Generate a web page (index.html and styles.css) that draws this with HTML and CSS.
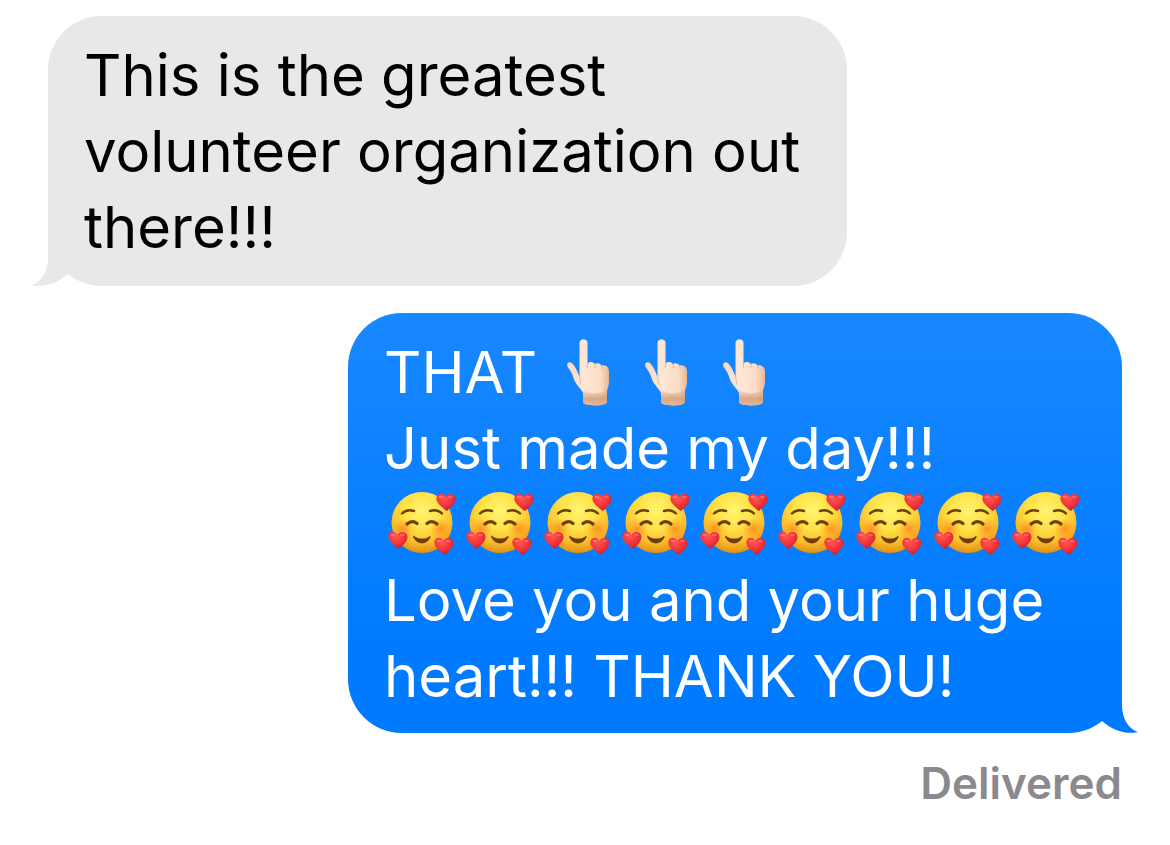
FILE: index.html
```html
<!DOCTYPE html>
<html lang="en">
<head>
<meta charset="utf-8">
<meta name="viewport" content="width=device-width, initial-scale=1">
<title>Messages</title>
<link rel="stylesheet" href="styles.css">
</head>
<body>
<svg class="sprite" aria-hidden="true">
  <defs>
    <radialGradient id="face-fill" cx="0.5" cy="0.3" r="0.7">
      <stop offset="0" stop-color="#fff570"/>
      <stop offset="0.45" stop-color="#ffe046"/>
      <stop offset="0.75" stop-color="#fcbe2b"/>
      <stop offset="1" stop-color="#e28f18"/>
    </radialGradient>
    <radialGradient id="blush">
      <stop offset="0" stop-color="#fb7a19" stop-opacity="0.7"/>
      <stop offset="1" stop-color="#fb8a19" stop-opacity="0"/>
    </radialGradient>
    <radialGradient id="heart-fill" cx="0.4" cy="0.3" r="0.7">
      <stop offset="0" stop-color="#ff5550"/>
      <stop offset="0.6" stop-color="#f2333a"/>
      <stop offset="1" stop-color="#c9222f"/>
    </radialGradient>
    <linearGradient id="skin" x1="0" y1="0" x2="1" y2="0">
      <stop offset="0" stop-color="#f8d6bd"/>
      <stop offset="0.4" stop-color="#fee7d6"/>
      <stop offset="0.8" stop-color="#fbdcc5"/>
      <stop offset="1" stop-color="#e6b794"/>
    </linearGradient>
    <linearGradient id="wrist" x1="0" y1="0" x2="0" y2="1">
      <stop offset="0" stop-color="#c98f6a" stop-opacity="0"/>
      <stop offset="0.6" stop-color="#c98f6a" stop-opacity="0.7"/>
      <stop offset="1" stop-color="#e0b090" stop-opacity="0.8"/>
    </linearGradient>
  </defs>
  <symbol id="heart" viewBox="0 0 20 18">
    <path fill="url(#heart-fill)" d="M11.5 17.5C10.8 18 10 17.8 9.4 17.1C6.5 14.3.8 10.6.4 6.2C.1 2.6 2.4.7 4.9.7C7 .7 8.5 2 9.3 4C10.6 1.7 12.5.6 14.9 1C18 1.500 19.900 4 19.400 7C18.700 11.200 14.400 14.600 11.500 17.500Z"/>
    <ellipse cx="5" cy="4" rx="2.500" ry="1.300" fill="#ff9a94" opacity="0.5"/>
    <ellipse cx="14.500" cy="4" rx="2.500" ry="1.300" fill="#ff9a94" opacity="0.4"/>
  </symbol>
  <symbol id="love-face" viewBox="-2 1 78 76">
    <circle cx="36" cy="37.500" r="30.500" fill="url(#face-fill)"/>
    <circle cx="17" cy="44" r="11" fill="url(#blush)"/>
    <circle cx="55" cy="44" r="11" fill="url(#blush)"/>
    <g fill="none" stroke="#6d3f0c" stroke-linecap="round">
      <path stroke-width="2.400" d="M16 28.500Q21 23.500 28 26M44 26Q51 23.500 56 28.500"/>
      <path stroke-width="3.200" d="M21 39Q26 34.500 31 38.500M41 38.500Q46 34.500 51 39"/>
    </g>
    <path fill="#6d3f0c" d="M27.500 50.500C26.700 51 27.300 52.500 28 53.500C32 60 40 60 43.800 53.500C44.600 52.500 44.900 51 44 50.700C41 54.600 31 54.600 27.500 50.500Z"/>
    <use href="#heart" x="50" y="8" width="20" height="18"/>
    <use href="#heart" x="2" y="46" width="20" height="18"/>
    <use href="#heart" x="48" y="52" width="20" height="18"/>
  </symbol>
  <symbol id="point-up" viewBox="-2 3 78 76">
    <path fill="url(#skin)" d="M24.500 46V12C24.500 7 32.500 7 32.500 12V32.500C34.500 30.500 38 30.500 39.700 33C42 31.500 45 32 46.500 34.500C51.500 33.500 54 36.500 54 41V50C54 56 52 58 52 61V71C52 75.500 28 75.500 28 71V62C26 57 20.500 54 18.500 47C17.500 43 15.500 40 13 36.500C10.500 32.500 14 29.500 17.300 32.500C21 36 22.500 41 24.500 46Z"/>
    <path fill="url(#wrist)" d="M27 58Q40 67 53 57.500Q52 60 52 61V71C52 75.500 28 75.500 28 71V62Q28 60 27 58Z"/>
    <path fill="none" stroke="#dda884" stroke-width="1" stroke-linecap="round" opacity="0.7" d="M32.500 32.500V37M39.700 33Q40.500 34.500 40.500 37M46.500 34.500Q47.300 36 47 38M24.500 46Q26 49 25.500 53"/>
  </symbol>
</svg>

<main class="thread">
  <div class="bubble received">
    <p class="text">This is the greatest volunteer organization out there!!!</p>
    <svg class="tail" viewBox="0 0 56 60" aria-hidden="true"><path d="M16 0V32C16 45 10 56 0 59C12 62 26 57 36 48L50 30V0Z"/></svg>
  </div>
  <div class="bubble sent">
    <p class="text">THAT <svg class="emoji" role="img" aria-label="Pointing up"><use href="#point-up"/></svg><svg class="emoji" role="img" aria-label="Pointing up"><use href="#point-up"/></svg><svg class="emoji" role="img" aria-label="Pointing up"><use href="#point-up"/></svg></p>
    <p class="text">Just made my day!!!</p>
    <p class="text faces"><svg class="emoji" role="img" aria-label="Smiling face with hearts"><use href="#love-face"/></svg><svg class="emoji" role="img" aria-label="Smiling face with hearts"><use href="#love-face"/></svg><svg class="emoji" role="img" aria-label="Smiling face with hearts"><use href="#love-face"/></svg><svg class="emoji" role="img" aria-label="Smiling face with hearts"><use href="#love-face"/></svg><svg class="emoji" role="img" aria-label="Smiling face with hearts"><use href="#love-face"/></svg><svg class="emoji" role="img" aria-label="Smiling face with hearts"><use href="#love-face"/></svg><svg class="emoji" role="img" aria-label="Smiling face with hearts"><use href="#love-face"/></svg><svg class="emoji" role="img" aria-label="Smiling face with hearts"><use href="#love-face"/></svg><svg class="emoji" role="img" aria-label="Smiling face with hearts"><use href="#love-face"/></svg></p>
    <p class="text">Love you and your huge heart!!! THANK YOU!</p>
    <svg class="tail" viewBox="0 0 56 60" aria-hidden="true"><path d="M16 0V32C16 45 10 56 0 59C12 62 26 57 36 48L50 30V0Z"/></svg>
  </div>
  <p class="status">Delivered</p>
</main>
</body>
</html>
```
FILE: styles.css
```css
* {
  box-sizing: border-box;
}

body {
  margin: 0;
  background: #fff;
  color: #000;
  font-family: Inter, "Liberation Sans", sans-serif;
}

.sprite {
  position: absolute;
  width: 0;
  height: 0;
}

.thread {
  display: flex;
  flex-direction: column;
  padding: 16px 48px;
}

.bubble {
  position: relative;
  border-radius: 54px;
  padding: 21px 36px;
}

.received {
  align-self: flex-start;
  max-width: 799px;
  background: #e8e8ea;
}

.sent {
  align-self: flex-end;
  max-width: 774px;
  margin-top: 27px;
  padding-top: 21px;
  padding-bottom: 19px;
  background: linear-gradient(#1888ff, #007aff 80%);
  color: #fff;
}

.text {
  margin: 0;
  font-size: 58px;
  line-height: 76px;
}

.faces {
  display: flex;
}

.emoji {
  flex: 0 1 78px;
  width: 78px;
  height: 76px;
  vertical-align: top;
}

.tail {
  position: absolute;
  bottom: 0;
  left: -16px;
  width: 56px;
  height: 60px;
  fill: #e8e8ea;
}

.sent .tail {
  left: auto;
  right: -16px;
  fill: #007aff;
  transform: scaleX(-1);
}

.status {
  align-self: flex-end;
  margin: 24px 0 0;
  color: #8a8a8e;
  font-size: 44px;
  font-weight: 600;
  line-height: 52px;
}
```
